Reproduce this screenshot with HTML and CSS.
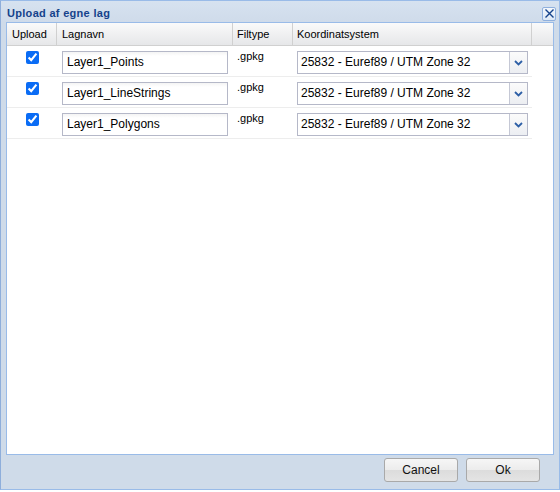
FILE: index.html
```html
<!DOCTYPE html>
<html>
<head>
<meta charset="utf-8">
<link rel="stylesheet" href="styles.css">
</head>
<body>
<div class="win">
  <div class="titlebar">
    <span class="title">Upload af egne lag</span>
    <span class="close"><svg width="11" height="11" viewBox="0 0 11 11"><path d="M1.5 1.5 L9.5 9.5 M9.5 1.5 L1.5 9.5" stroke="#15428b" stroke-width="1.4" fill="none"/></svg></span>
  </div>
  <div class="panel">
    <div class="grid-head">
      <div class="hc">Upload</div>
      <div class="hc">Lagnavn</div>
      <div class="hc">Filtype</div>
      <div class="hc">Koordinatsystem</div>
      <div class="hc last"></div>
    </div>
    <div class="rows">
      <div class="row">
        <div class="c c1"><input type="checkbox" class="cb" checked></div>
        <div class="c c2"><div class="field">Layer1_Points</div></div>
        <div class="c c3">.gpkg</div>
        <div class="c c4"><div class="combo"><span class="ctext">25832 - Euref89 / UTM Zone 32</span><span class="trig"><svg width="9" height="6" viewBox="0 0 9 6"><path d="M1 1 L4.5 4.5 L8 1" stroke="#2d5fa6" stroke-width="1.8" fill="none"/></svg></span></div></div>
      </div>
      <div class="row">
        <div class="c c1"><input type="checkbox" class="cb" checked></div>
        <div class="c c2"><div class="field">Layer1_LineStrings</div></div>
        <div class="c c3">.gpkg</div>
        <div class="c c4"><div class="combo"><span class="ctext">25832 - Euref89 / UTM Zone 32</span><span class="trig"><svg width="9" height="6" viewBox="0 0 9 6"><path d="M1 1 L4.5 4.5 L8 1" stroke="#2d5fa6" stroke-width="1.8" fill="none"/></svg></span></div></div>
      </div>
      <div class="row">
        <div class="c c1"><input type="checkbox" class="cb" checked></div>
        <div class="c c2"><div class="field">Layer1_Polygons</div></div>
        <div class="c c3">.gpkg</div>
        <div class="c c4"><div class="combo"><span class="ctext">25832 - Euref89 / UTM Zone 32</span><span class="trig"><svg width="9" height="6" viewBox="0 0 9 6"><path d="M1 1 L4.5 4.5 L8 1" stroke="#2d5fa6" stroke-width="1.8" fill="none"/></svg></span></div></div>
      </div>
    </div>
  </div>
  <div class="footer">
    <button class="btn">Cancel</button>
    <button class="btn">Ok</button>
  </div>
</div>
</body>
</html>
```
FILE: styles.css
```css
html, body {
  margin: 0;
  padding: 0;
  background: #ffffff;
}
body {
  font-family: "Liberation Sans", Arial, sans-serif;
  font-size: 11px;
  color: #000;
}
.win {
  width: 560px;
  height: 490px;
  box-sizing: border-box;
  border: 1px solid #99bbe8;
  border-left-color: #8eaedb;
  background: #cfdbe9;
  display: flex;
  flex-direction: column;
  padding: 0 5px 0 5px;
}
.titlebar {
  height: 21px;
  display: flex;
  align-items: center;
  justify-content: space-between;
  background: linear-gradient(#d6e2f0, #cfdbea);
  margin: 0 -5px;
  padding: 0 3px 0 6px;
}
.title {
  font-weight: bold;
  font-size: 11px;
  letter-spacing: 0.3px;
  color: #15428b;
  margin-top: 2px;
}
.close {
  width: 12px;
  height: 12px;
  border: 1px solid #8fb0de;
  background: linear-gradient(#f3f7fc, #dde8f5);
  border-radius: 2px;
  display: flex;
  align-items: center;
  justify-content: center;
  margin-top: 4px;
}
.panel {
  flex: 0 0 auto;
  height: 433px;
  box-sizing: border-box;
  border: 1px solid #99bbe8;
  background: #fff;
  overflow: hidden;
}
.grid-head {
  display: grid;
  grid-template-columns: 50px 176px 60px 239px 1fr;
  height: 22px;
  border-bottom: 1px solid #d0d0d0;
  background: linear-gradient(#fafafa, #e6e7e9);
}
.hc {
  border-right: 1px solid #d0d0d0;
  padding-left: 5px;
  line-height: 22px;
  color: #000;
}
.hc:nth-child(3), .hc:nth-child(4) {
  padding-left: 4px;
}
.hc.last {
  border-right: none;
}
.rows {
  width: 525px;
}
.row {
  display: grid;
  grid-template-columns: 50px 176px 60px 239px;
  height: 30px;
  border-bottom: 1px solid #ededed;
}
.c {
  padding-top: 5px;
}
.c1 {
  display: flex;
  justify-content: center;
}
.cb {
  margin: 0;
  width: 13px;
  height: 13px;
  accent-color: #0a6cf5;
}
.c2 {
  padding-left: 5px;
}
.field {
  width: 166px;
  height: 23px;
  box-sizing: border-box;
  border: 1px solid #b5b8c8;
  background: linear-gradient(#f4f4f4, #ffffff 4px);
  font-size: 12px;
  line-height: 21px;
  padding-left: 4px;
}
.c3 {
  padding-left: 4px;
  padding-top: 4px;
  font-size: 11px;
}
.c4 {
  padding-left: 4px;
}
.combo {
  width: 231px;
  height: 23px;
  box-sizing: border-box;
  border: 1px solid #b5b8c8;
  background: #fff;
  display: flex;
  font-size: 12px;
}
.ctext {
  flex: 1;
  line-height: 21px;
  padding-left: 3px;
  white-space: nowrap;
}
.trig {
  width: 17px;
  border-left: 1px solid #c5c8d5;
  background: linear-gradient(#fbfbfb, #eceef2);
  display: flex;
  align-items: center;
  justify-content: center;
}
.footer {
  flex: 1;
  display: flex;
  justify-content: flex-end;
  align-items: flex-start;
  gap: 8px;
  padding: 3px 14px 0 0;
}
.btn {
  width: 74px;
  height: 24px;
  border: 1px solid #a9a9a9;
  border-radius: 3px;
  background: linear-gradient(#f6f6f6 0%, #ececec 50%, #dcdcdc 51%, #e4e4e4 100%);
  font-family: "Liberation Sans", Arial, sans-serif;
  font-size: 12px;
  color: #111;
  padding: 0;
}
```
